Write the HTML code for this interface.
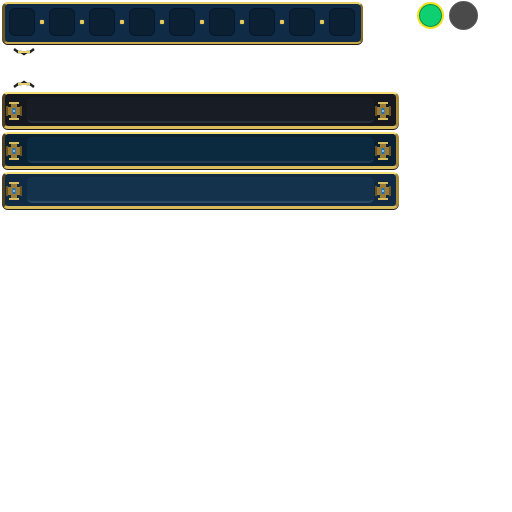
<!DOCTYPE html><html><head><style>
body{margin:0;width:512px;height:512px;background:#fff;position:relative;overflow:hidden}
div{position:absolute;box-sizing:border-box}
.tb{left:2px;top:2px;width:361px;height:42px;background:#0f2b45;border-top:2px solid #e8cf6a;border-bottom:2px solid #c9a84a;border-left:3px solid #6b5622;border-right:2px solid #8a6d2a;border-radius:6px;box-shadow:0 1px 0 #1a1a1a}
.slot{top:8px;width:26px;height:28px;background:#0b2133;border:1px solid #08182a;border-radius:6px}
.dot{top:20px;width:4px;height:4px;background:#e8c860;border-radius:1px;box-shadow:0 0 1px #a07d2a}
.bar{left:2px;width:397px;height:37px;border-top:2px solid #f5e07a;border-bottom:3px solid #d8bb5a;border-left:3px solid #4e4020;border-right:3px solid #a8893a;border-radius:6px;box-shadow:0 1px 0 #1a1a1a}
.in{left:22px;right:22px;top:3px;bottom:3px;border-radius:5px}
</style></head><body>
<div class="tb"></div>
<div class="slot" style="left:9px"></div><div class="slot" style="left:49px"></div><div class="slot" style="left:89px"></div><div class="slot" style="left:129px"></div><div class="slot" style="left:169px"></div><div class="slot" style="left:209px"></div><div class="slot" style="left:249px"></div><div class="slot" style="left:289px"></div><div class="slot" style="left:329px"></div>
<div class="dot" style="left:40px"></div><div class="dot" style="left:80px"></div><div class="dot" style="left:120px"></div><div class="dot" style="left:160px"></div><div class="dot" style="left:200px"></div><div class="dot" style="left:240px"></div><div class="dot" style="left:280px"></div><div class="dot" style="left:320px"></div>
<svg style="position:absolute;left:13px;top:47px" width="22" height="44"><path d="M1 2l4 3h3l3 2 3-2h3l4-3" stroke="#222" stroke-width="2.5" fill="none"/><path d="M5 5h12" stroke="#e8cf6a" stroke-width="2"/><path d="M1 40l4-3h3l3-2 3 2h3l4 3" stroke="#222" stroke-width="2.5" fill="none"/><path d="M5 37h12" stroke="#e8cf6a" stroke-width="2"/></svg>
<div style="left:417px;top:2px;width:27px;height:27px;border-radius:50%;background:#0fd070;border:2px solid #f0e020;box-shadow:inset 0 0 0 1px #0a8a45"></div>
<div style="left:449px;top:1px;width:29px;height:29px;border-radius:50%;background:#4a4a4a;border:1px solid #5a5a5a"></div>
<div class="bar" style="top:92px;background:#15191f"><div class="in" style="background:#181c25;border-bottom:2px solid #26303c"></div></div>
<div class="bar" style="top:132px;background:#0a2133"><div class="in" style="background:#0b2a3f;border-bottom:2px solid #1d3a52"></div></div>
<div class="bar" style="top:172px;background:#0f2a42"><div class="in" style="background:#15324d;border-bottom:2px solid #2a4a66"></div></div>
<svg style="position:absolute;left:0;top:0" width="512" height="220">
<defs><g id="c"><rect x="-3" y="-9" width="6" height="18" fill="#9a7c3a"/><rect x="-8" y="-4" width="16" height="8" fill="#9a7c3a"/><rect x="-5" y="-9" width="10" height="2" fill="#d8bb5a"/><rect x="-5" y="7" width="10" height="2" fill="#d8bb5a"/><rect x="-8" y="-5" width="2" height="10" fill="#6b5622"/><rect x="6" y="-5" width="2" height="10" fill="#6b5622"/><rect x="-1.5" y="-3" width="3" height="6" fill="#1f6fb8"/><rect x="-1" y="-1" width="2" height="2" fill="#6fc0f0"/></g></defs>
<use href="#c" x="14" y="111"/><use href="#c" x="383" y="111"/>
<use href="#c" x="14" y="151"/><use href="#c" x="383" y="151"/>
<use href="#c" x="14" y="191"/><use href="#c" x="383" y="191"/>
</svg>
</body></html>
